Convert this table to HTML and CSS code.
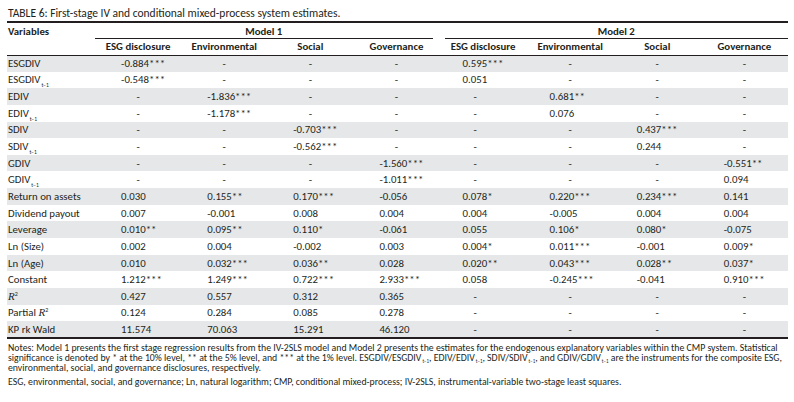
FILE: index.html
```html
<!DOCTYPE html>
<html>
<head>
<meta charset="utf-8">
<link rel="stylesheet" href="styles.css">
</head>
<body>
<div class="page">
  <h1 class="title">TABLE 6: First-stage IV and conditional mixed-process system estimates.</h1>
  <table class="est">
    <colgroup>
      <col class="c-var"><col class="c-m1"><col class="c-m1"><col class="c-m1"><col class="c-m1">
      <col class="c-m2"><col class="c-m2"><col class="c-m2"><col class="c-m2">
    </colgroup>
    <thead>
      <tr class="h1">
        <th class="var">Variables</th>
        <th colspan="4" class="model"><div class="m m1">Model 1</div></th>
        <th colspan="4" class="model"><div class="m m2">Model 2</div></th>
      </tr>
      <tr class="h2">
        <th></th>
        <th>ESG disclosure</th><th>Environmental</th><th>Social</th><th>Governance</th>
        <th>ESG disclosure</th><th>Environmental</th><th>Social</th><th>Governance</th>
      </tr>
    </thead>
    <tbody>
      <tr class="g"><td>ESGDIV</td><td class="n">-0.884***</td><td class="d">-</td><td class="d">-</td><td class="d">-</td><td class="n">0.595***</td><td class="d">-</td><td class="d">-</td><td class="d">-</td></tr>
      <tr><td>ESGDIV<sub>t−1</sub></td><td class="n">-0.548***</td><td class="d">-</td><td class="d">-</td><td class="d">-</td><td class="n">0.051</td><td class="d">-</td><td class="d">-</td><td class="d">-</td></tr>
      <tr class="g"><td>EDIV</td><td class="d">-</td><td class="n">-1.836***</td><td class="d">-</td><td class="d">-</td><td class="d">-</td><td class="n">0.681**</td><td class="d">-</td><td class="d">-</td></tr>
      <tr><td>EDIV<sub>t−1</sub></td><td class="d">-</td><td class="n">-1.178***</td><td class="d">-</td><td class="d">-</td><td class="d">-</td><td class="n">0.076</td><td class="d">-</td><td class="d">-</td></tr>
      <tr class="g"><td>SDIV</td><td class="d">-</td><td class="d">-</td><td class="n">-0.703***</td><td class="d">-</td><td class="d">-</td><td class="d">-</td><td class="n">0.437***</td><td class="d">-</td></tr>
      <tr><td>SDIV<sub>t−1</sub></td><td class="d">-</td><td class="d">-</td><td class="n">-0.562***</td><td class="d">-</td><td class="d">-</td><td class="d">-</td><td class="n">0.244</td><td class="d">-</td></tr>
      <tr class="g"><td>GDIV</td><td class="d">-</td><td class="d">-</td><td class="d">-</td><td class="n">-1.560***</td><td class="d">-</td><td class="d">-</td><td class="d">-</td><td class="n">-0.551**</td></tr>
      <tr><td>GDIV<sub>t−1</sub></td><td class="d">-</td><td class="d">-</td><td class="d">-</td><td class="n">-1.011***</td><td class="d">-</td><td class="d">-</td><td class="d">-</td><td class="n">0.094</td></tr>
      <tr class="g"><td>Return on assets</td><td class="n">0.030</td><td class="n">0.155**</td><td class="n">0.170***</td><td class="n">-0.056</td><td class="n">0.078*</td><td class="n">0.220***</td><td class="n">0.234***</td><td class="n">0.141</td></tr>
      <tr><td>Dividend payout</td><td class="n">0.007</td><td class="n">-0.001</td><td class="n">0.008</td><td class="n">0.004</td><td class="n">0.004</td><td class="n">-0.005</td><td class="n">0.004</td><td class="n">0.004</td></tr>
      <tr class="g"><td>Leverage</td><td class="n">0.010**</td><td class="n">0.095**</td><td class="n">0.110*</td><td class="n">-0.061</td><td class="n">0.055</td><td class="n">0.106*</td><td class="n">0.080*</td><td class="n">-0.075</td></tr>
      <tr><td>Ln (Size)</td><td class="n">0.002</td><td class="n">0.004</td><td class="n">-0.002</td><td class="n">0.003</td><td class="n">0.004*</td><td class="n">0.011***</td><td class="n">-0.001</td><td class="n">0.009*</td></tr>
      <tr class="g"><td>Ln (Age)</td><td class="n">0.010</td><td class="n">0.032***</td><td class="n">0.036**</td><td class="n">0.028</td><td class="n">0.020**</td><td class="n">0.043***</td><td class="n">0.028**</td><td class="n">0.037*</td></tr>
      <tr><td>Constant</td><td class="n">1.212***</td><td class="n">1.249***</td><td class="n">0.722***</td><td class="n">2.933***</td><td class="n">0.058</td><td class="n">-0.245***</td><td class="n">-0.041</td><td class="n">0.910***</td></tr>
      <tr class="g"><td><i class="r">R</i><sup>2</sup></td><td class="n">0.427</td><td class="n">0.557</td><td class="n">0.312</td><td class="n">0.365</td><td class="d">-</td><td class="d">-</td><td class="d">-</td><td class="d">-</td></tr>
      <tr><td>Partial <i class="r">R</i><sup>2</sup></td><td class="n">0.124</td><td class="n">0.284</td><td class="n">0.085</td><td class="n">0.278</td><td class="d">-</td><td class="d">-</td><td class="d">-</td><td class="d">-</td></tr>
      <tr class="g last"><td>KP rk Wald</td><td class="n">11.574</td><td class="n">70.063</td><td class="n">15.291</td><td class="n">46.120</td><td class="d">-</td><td class="d">-</td><td class="d">-</td><td class="d">-</td></tr>
    </tbody>
  </table>
  <p class="note">Notes: Model 1 presents the first stage regression results from the IV-2SLS model and Model 2 presents the estimates for the endogenous explanatory variables within the CMP system. Statistical significance is denoted by * at the 10% level, ** at the 5% level, and *** at the 1% level. ESGDIV/ESGDIV<sub>t−1</sub>, EDIV/EDIV<sub>t−1</sub>, SDIV/SDIV<sub>t−1</sub>, and GDIV/GDIV<sub>t−1</sub> are the instruments for the composite ESG, environmental, social, and governance disclosures, respectively.</p>
  <p class="note abbr">ESG, environmental, social, and governance; Ln, natural logarithm; CMP, conditional mixed-process; IV-2SLS, instrumental-variable two-stage least squares.</p>
</div>
</body>
</html>
```
FILE: styles.css
```css
* { box-sizing: border-box; }
html, body { margin: 0; padding: 0; background: #fff; }
body {
  font-family: "Carlito", "Lato", "Open Sans", sans-serif;
  color: #231f20;
}
.page {
  padding: 6px 6px 0 7px;
  width: 794px;
}
.title {
  margin: 0 0 0 1px;
  font-size: 11.5px;
  font-weight: normal;
  line-height: 14px;
  height: 15px;
}
.est {
  width: 781px;
  border-collapse: collapse;
  table-layout: fixed;
  border-top: 2px solid #231f20;
  border-bottom: 2px solid #231f20;
  font-size: 10.8px;
}
.c-var { width: 88px; }
.c-m1 { width: 86px; }
.c-m2 { width: 87px; }
.est th {
  font-weight: bold;
  padding: 0;
  text-align: center;
  white-space: nowrap;
}
.h1 th { height: 17px; vertical-align: top; padding-top: 2px; line-height: 13px; }
.h1 th.var { text-align: left; padding-left: 1px; }
.h1 th.model { padding-top: 0; vertical-align: bottom; }
.m {
  border-bottom: 1px solid #231f20;
  height: 15px;
  line-height: 13px;
  padding-top: 1px;
}
.m1 { margin-right: 7px; }
.m2 { margin-left: 5px; }
.h2 th { height: 16px; line-height: 13px; border-bottom: 1px solid #231f20; }
.est td {
  height: 16.65px;
  padding: 0;
  line-height: 13px;
  white-space: nowrap;
}
.est td:first-child { padding-left: 1px; }
.g td { background: #e6e7e8; }
.est td.n { padding-left: 26px; }
.est td:nth-child(n+6).n { padding-left: 23px; }
.est td.d { text-align: center; }
.est td:nth-child(6).d { padding-right: 16px; }
sub {
  font-size: 5.5px;
  vertical-align: -4px;
  line-height: 0;
  margin-left: 1px;
}
sup {
  font-size: 6px;
  vertical-align: 4px;
  line-height: 0;
}
.r {
  font-family: "Liberation Serif", serif;
  font-size: 11px;
}
.note {
  margin: 4px 0 0 1px;
  font-size: 9.8px;
  line-height: 10px;
  width: 781px;
}
.note sub { font-size: 5px; vertical-align: -2px; }
.abbr { margin-top: 4px; }
```
